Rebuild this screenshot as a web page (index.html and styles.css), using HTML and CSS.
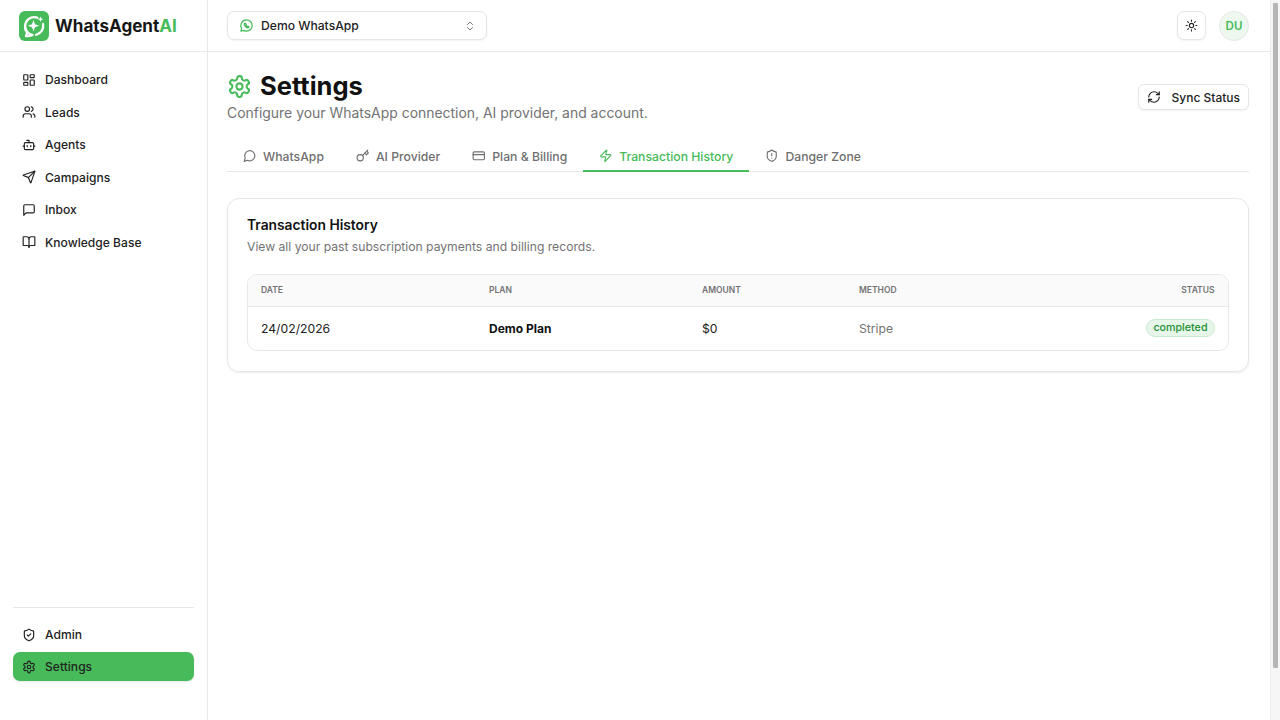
FILE: index.html
```html
<!DOCTYPE html>
<html lang="en">

<head>
  <meta charset="UTF-8" />
  <meta name="viewport" content="width=device-width, initial-scale=1.0" />
  <title>Settings - WhatsAgentAI</title>
  <link rel="stylesheet" href="styles.css">
</head>

<body>
  <div class="app">
    <aside class="sidebar">
      <div class="brand">
        <svg class="brand-logo" viewBox="0 0 30 30" width="30" height="30">
          <rect width="30" height="30" rx="6" fill="#47bb59" />
          <path d="M18.500 6.800A9 9 0 1 0 13.500 24l-.3 0c-1.500 .9-3.700 1.200-6.200 1 .8-1.100 1.100-2.500 .8-4A9 9 0 0 1 6 15M24 13a9 9 0 0 1-7 10.800" fill="none" stroke="#fff" stroke-width="2.300" stroke-linecap="round" stroke-linejoin="round" />
          <path d="M14.500 9l1.500 4.200 4.200 1.500-4.200 1.500-1.500 4.200-1.500-4.200-4.200-1.500 4.200-1.500z" fill="#fff" />
          <path d="M21.500 5.500l.8 2 2 .8-2 .8-.8 2-.8-2-2-.8 2-.8z" fill="#fff" />
        </svg>
        <span class="brand-name">WhatsAgent<span class="brand-ai">AI</span></span>
      </div>

      <nav class="nav">
        <a class="nav-item" href="#">
          <svg class="icon" viewBox="0 0 24 24"><rect x="3" y="3" width="7" height="9" rx="1" /><rect x="14" y="3" width="7" height="5" rx="1" /><rect x="14" y="12" width="7" height="9" rx="1" /><rect x="3" y="16" width="7" height="5" rx="1" /></svg>
          Dashboard
        </a>
        <a class="nav-item" href="#">
          <svg class="icon" viewBox="0 0 24 24"><path d="M16 21v-2a4 4 0 0 0-4-4H6a4 4 0 0 0-4 4v2" /><circle cx="9" cy="7" r="4" /><path d="M22 21v-2a4 4 0 0 0-3-3.870" /><path d="M16 3.130a4 4 0 0 1 0 7.750" /></svg>
          Leads
        </a>
        <a class="nav-item" href="#">
          <svg class="icon" viewBox="0 0 24 24"><path d="M12 8V4H8" /><rect x="4" y="8" width="16" height="12" rx="2" /><path d="M2 14h2" /><path d="M20 14h2" /><path d="M15 13v2" /><path d="M9 13v2" /></svg>
          Agents
        </a>
        <a class="nav-item" href="#">
          <svg class="icon" viewBox="0 0 24 24"><path d="M14.500 21.700a.5.5 0 0 0 .9 0l6.500-19a.5.5 0 0 0-.6-.6l-19 6.500a.5.5 0 0 0 0 .9l7.900 3.200a2 2 0 0 1 1.100 1.100z" /><path d="M21.900 2.100 10.900 13.100" /></svg>
          Campaigns
        </a>
        <a class="nav-item" href="#">
          <svg class="icon" viewBox="0 0 24 24"><path d="M21 15a2 2 0 0 1-2 2H7l-4 4V5a2 2 0 0 1 2-2h14a2 2 0 0 1 2 2z" /></svg>
          Inbox
        </a>
        <a class="nav-item" href="#">
          <svg class="icon" viewBox="0 0 24 24"><path d="M12 7v14" /><path d="M3 18a1 1 0 0 1-1-1V4a1 1 0 0 1 1-1h5a4 4 0 0 1 4 4 4 4 0 0 1 4-4h5a1 1 0 0 1 1 1v13a1 1 0 0 1-1 1h-6a3 3 0 0 0-3 3 3 3 0 0 0-3-3z" /></svg>
          Knowledge Base
        </a>
      </nav>

      <div class="nav-bottom">
        <a class="nav-item" href="#">
          <svg class="icon" viewBox="0 0 24 24"><path d="M20 13c0 5-3.500 7.500-7.660 8.950a1 1 0 0 1-.67-.01C7.500 20.500 4 18 4 13V6a1 1 0 0 1 1-1c2 0 4.500-1.200 6.240-2.720a1.170 1.170 0 0 1 1.520 0C14.510 3.810 17 5 19 5a1 1 0 0 1 1 1z" /><path d="m9 12 2 2 4-4" /></svg>
          Admin
        </a>
        <a class="nav-item active" href="#">
          <svg class="icon" viewBox="0 0 24 24"><path d="M12.220 2h-.44a2 2 0 0 0-2 2v.18a2 2 0 0 1-1 1.730l-.43.25a2 2 0 0 1-2 0l-.15-.08a2 2 0 0 0-2.730.73l-.22.38a2 2 0 0 0 .73 2.730l.15.1a2 2 0 0 1 1 1.720v.51a2 2 0 0 1-1 1.740l-.15.09a2 2 0 0 0-.73 2.730l.22.38a2 2 0 0 0 2.730.73l.15-.08a2 2 0 0 1 2 0l.43.25a2 2 0 0 1 1 1.730V20a2 2 0 0 0 2 2h.44a2 2 0 0 0 2-2v-.18a2 2 0 0 1 1-1.730l.43-.25a2 2 0 0 1 2 0l.15.08a2 2 0 0 0 2.730-.73l.22-.39a2 2 0 0 0-.73-2.730l-.15-.08a2 2 0 0 1-1-1.740v-.5a2 2 0 0 1 1-1.740l.15-.09a2 2 0 0 0 .73-2.730l-.22-.38a2 2 0 0 0-2.730-.73l-.15.08a2 2 0 0 1-2 0l-.43-.25a2 2 0 0 1-1-1.730V4a2 2 0 0 0-2-2z" /><circle cx="12" cy="12" r="3" /></svg>
          Settings
        </a>
      </div>
    </aside>

    <div class="main">
      <header class="topbar">
        <button class="instance-select">
          <span class="instance-label">
            <svg class="icon icon-green" viewBox="0 0 24 24"><path d="M12 3a9 9 0 0 1 0 18 9 9 0 0 1-4.500-1.200L3 21l1.200-4.400A9 9 0 0 1 12 3z" /><path d="M9 8.500c-.6.6-.8 1.600-.3 2.800.7 1.700 2.300 3.300 4 4 1.200.5 2.200.3 2.800-.3l.5-.9-2-1.200-.9.8c-.9-.4-1.900-1.400-2.300-2.300l.8-.9L10.400 8.500z" /></svg>
            Demo WhatsApp
          </span>
          <svg class="icon-small" viewBox="0 0 24 24"><path d="m7 15 5 5 5-5" /><path d="m7 9 5-5 5 5" /></svg>
        </button>
        <div class="topbar-right">
          <button class="theme-btn">
            <svg class="icon" viewBox="0 0 24 24"><circle cx="12" cy="12" r="4" /><path d="M12 2v2" /><path d="M12 20v2" /><path d="m4.930 4.930 1.410 1.410" /><path d="m17.660 17.660 1.410 1.410" /><path d="M2 12h2" /><path d="M20 12h2" /><path d="m6.340 17.660-1.410 1.410" /><path d="m19.070 4.930-1.410 1.410" /></svg>
          </button>
          <div class="avatar">DU</div>
        </div>
      </header>

      <main class="content">
        <div class="page-head">
          <div>
            <h1 class="page-title">
              <svg class="title-icon" viewBox="0 0 24 24"><path d="M12.220 2h-.44a2 2 0 0 0-2 2v.18a2 2 0 0 1-1 1.730l-.43.25a2 2 0 0 1-2 0l-.15-.08a2 2 0 0 0-2.730.73l-.22.38a2 2 0 0 0 .73 2.730l.15.1a2 2 0 0 1 1 1.720v.51a2 2 0 0 1-1 1.740l-.15.09a2 2 0 0 0-.73 2.730l.22.38a2 2 0 0 0 2.730.73l.15-.08a2 2 0 0 1 2 0l.43.25a2 2 0 0 1 1 1.730V20a2 2 0 0 0 2 2h.44a2 2 0 0 0 2-2v-.18a2 2 0 0 1 1-1.730l.43-.25a2 2 0 0 1 2 0l.15.08a2 2 0 0 0 2.730-.73l.22-.39a2 2 0 0 0-.73-2.730l-.15-.08a2 2 0 0 1-1-1.740v-.5a2 2 0 0 1 1-1.740l.15-.09a2 2 0 0 0 .73-2.730l-.22-.38a2 2 0 0 0-2.730-.73l-.15.08a2 2 0 0 1-2 0l-.43-.25a2 2 0 0 1-1-1.730V4a2 2 0 0 0-2-2z" /><circle cx="12" cy="12" r="3" /></svg>
              Settings
            </h1>
            <p class="page-sub">Configure your WhatsApp connection, AI provider, and account.</p>
          </div>
          <button class="sync-btn">
            <svg class="icon" viewBox="0 0 24 24"><path d="M3 12a9 9 0 0 1 9-9 9.750 9.750 0 0 1 6.740 2.740L21 8" /><path d="M21 3v5h-5" /><path d="M21 12a9 9 0 0 1-9 9 9.750 9.750 0 0 1-6.740-2.740L3 16" /><path d="M8 16H3v5" /></svg>
            Sync Status
          </button>
        </div>

        <div class="tabs">
          <a class="tab" href="#">
            <svg class="icon" viewBox="0 0 24 24"><path d="M7.900 20A9 9 0 1 0 4 16.100L2 22z" /></svg>
            WhatsApp
          </a>
          <a class="tab" href="#">
            <svg class="icon" viewBox="0 0 24 24"><circle cx="7.500" cy="15.500" r="5.500" /><path d="m21 2-9.600 9.600" /><path d="m15.500 7.500 3 3L22 7l-3-3" /></svg>
            AI Provider
          </a>
          <a class="tab" href="#">
            <svg class="icon" viewBox="0 0 24 24"><rect x="2" y="5" width="20" height="14" rx="2" /><path d="M2 10h20" /></svg>
            Plan &amp; Billing
          </a>
          <a class="tab tab-active" href="#">
            <svg class="icon" viewBox="0 0 24 24"><path d="M4 14a1 1 0 0 1-.78-1.630l9.900-10.200a.5.5 0 0 1 .86.46l-1.920 6.020A1 1 0 0 0 13 10h7a1 1 0 0 1 .78 1.630l-9.900 10.200a.5.5 0 0 1-.86-.46l1.920-6.020A1 1 0 0 0 11 14z" /></svg>
            Transaction History
          </a>
          <a class="tab" href="#">
            <svg class="icon" viewBox="0 0 24 24"><path d="M20 13c0 5-3.500 7.500-7.660 8.950a1 1 0 0 1-.67-.01C7.500 20.500 4 18 4 13V6a1 1 0 0 1 1-1c2 0 4.500-1.200 6.240-2.720a1.170 1.170 0 0 1 1.520 0C14.510 3.810 17 5 19 5a1 1 0 0 1 1 1z" /><path d="M12 8v4" /><path d="M12 16h.01" /></svg>
            Danger Zone
          </a>
        </div>

        <section class="card">
          <h2 class="card-title">Transaction History</h2>
          <p class="card-sub">View all your past subscription payments and billing records.</p>

          <div class="table-wrap">
            <table class="tx-table">
              <thead>
                <tr>
                  <th class="col-date">Date</th>
                  <th class="col-plan">Plan</th>
                  <th class="col-amount">Amount</th>
                  <th class="col-method">Method</th>
                  <th class="col-status">Status</th>
                </tr>
              </thead>
              <tbody>
                <tr>
                  <td>24/02/2026</td>
                  <td class="plan-name">Demo Plan</td>
                  <td>$0</td>
                  <td class="method">Stripe</td>
                  <td class="col-status"><span class="badge">completed</span></td>
                </tr>
              </tbody>
            </table>
          </div>
        </section>
      </main>
    </div>

    <!-- The window's scrollbar, which the screenshot shows -->
    <div class="scrollbar">
      <div class="scrollbar-thumb"></div>
    </div>
  </div>
</body>

</html>
```

FILE: styles.css
```css
* {
  box-sizing: border-box;
}

body {
  margin: 0;
  font-family: Inter, "Noto Sans", sans-serif;
  color: #111;
  background-color: #fff;
}

a {
  color: inherit;
  text-decoration: none;
}

button {
  font-family: inherit;
  cursor: pointer;
}

/* Layout */
.app {
  display: flex;
  height: 720px;
  overflow: hidden;
}

.scrollbar {
  width: 10px;
  flex-shrink: 0;
  padding: 3px 2px 0;
  background-color: #f6f6f6;
  border-left: 1px solid #ececec;
}

.scrollbar-thumb {
  height: 665px;
  background-color: #b5b5b5;
  border-radius: 1px;
}

/* Sidebar */
.sidebar {
  width: 208px;
  flex-shrink: 0;
  display: flex;
  flex-direction: column;
  border-right: 1px solid #e8e8e8;
}

.brand {
  height: 52px;
  flex-shrink: 0;
  display: flex;
  align-items: center;
  gap: 6px;
  padding-left: 19px;
  border-bottom: 1px solid #e8e8e8;
}

.brand-logo {
  flex-shrink: 0;
}

.brand-name {
  font-size: 17.100px;
  font-weight: 700;
  color: #171717;
}

.brand-ai {
  color: #47bb59;
}

.nav {
  flex: 1;
  display: flex;
  flex-direction: column;
  gap: 3.500px;
  padding: 13px 13px;
}

.nav-item {
  height: 29px;
  display: flex;
  align-items: center;
  gap: 9px;
  padding-left: 9px;
  border-radius: 7px;
  font-size: 12.050px;
  letter-spacing: 0.02px;
  font-weight: 500;
  color: #222;
}

.nav-item.active {
  background-color: #47bb59;
  box-shadow: 0 1px 2px rgba(0, 0, 0, 0.1);
}

.nav-bottom {
  display: flex;
  flex-direction: column;
  gap: 3px;
  margin: 0 13px;
  padding: 12.500px 0 39px;
  border-top: 1px solid #e8e8e8;
}

.icon {
  width: 14px;
  height: 14px;
  flex-shrink: 0;
  fill: none;
  stroke: currentColor;
  stroke-width: 2;
  stroke-linecap: round;
  stroke-linejoin: round;
}

.icon-green {
  width: 15px;
  height: 15px;
  color: #47bb59;
}

.icon-small {
  width: 12px;
  height: 12px;
  fill: none;
  stroke: #777;
  stroke-width: 2;
  stroke-linecap: round;
  stroke-linejoin: round;
}

/* Top bar */
.main {
  flex: 1;
  min-width: 0;
}

.topbar {
  height: 52px;
  display: flex;
  align-items: center;
  justify-content: space-between;
  padding: 0 21px 0 19px;
  border-bottom: 1px solid #e8e8e8;
}

.instance-select {
  width: 260px;
  height: 29px;
  display: flex;
  align-items: center;
  justify-content: space-between;
  padding: 0 10px 0 11px;
  background-color: #fff;
  border: 1px solid #e6e6e6;
  border-radius: 7px;
  box-shadow: 0 1px 2px rgba(0, 0, 0, 0.05);
  font-size: 12.150px;
  font-weight: 500;
  color: #222;
}

.instance-label {
  display: flex;
  align-items: center;
  gap: 7px;
}

.topbar-right {
  display: flex;
  align-items: center;
  gap: 13px;
}

.theme-btn {
  width: 29px;
  height: 29px;
  display: flex;
  align-items: center;
  justify-content: center;
  padding: 0;
  background-color: #fff;
  border: 1px solid #e6e6e6;
  border-radius: 7px;
  box-shadow: 0 1px 2px rgba(0, 0, 0, 0.05);
  color: #222;
}

.theme-btn .icon {
  width: 13px;
  height: 13px;
}

.avatar {
  width: 30px;
  height: 30px;
  display: flex;
  align-items: center;
  justify-content: center;
  border-radius: 50%;
  background-color: #edf8ef;
  border: 1px solid #e6e6e6;
  color: #47bb59;
  font-size: 11.500px;
  font-weight: 600;
}

/* Page head */
.content {
  padding: 19px 21px 20px 19px;
}

.page-head {
  display: flex;
  justify-content: space-between;
  align-items: center;
}

.page-title {
  display: flex;
  align-items: center;
  gap: 8px;
  margin: 0;
  font-size: 25.500px;
  line-height: 30px;
  font-weight: 700;
  color: #111;
}

.title-icon {
  width: 25px;
  height: 25px;
  fill: none;
  stroke: #47bb59;
  stroke-width: 2;
  stroke-linecap: round;
  stroke-linejoin: round;
}

.page-sub {
  margin: 1px 0 0;
  font-size: 13.950px;
  line-height: 21px;
  color: #737373;
}

.sync-btn {
  height: 26px;
  display: flex;
  align-items: center;
  gap: 11px;
  padding: 0 8px;
  background-color: #fff;
  border: 1px solid #e6e6e6;
  border-radius: 6px;
  box-shadow: 0 1px 2px rgba(0, 0, 0, 0.05);
  font-size: 12px;
  font-weight: 500;
  color: #222;
}

/* Tabs */
.tabs {
  display: flex;
  margin-top: 19px;
  border-bottom: 1px solid #e8e8e8;
}

.tab {
  height: 30px;
  display: flex;
  align-items: center;
  gap: 6.500px;
  padding: 0 16px;
  margin-bottom: -1px;
  border-bottom: 2px solid transparent;
  font-size: 12.220px;
  font-weight: 500;
  color: #6f6f6f;
}

.tab .icon {
  width: 13.500px;
  height: 13.500px;
}

.tab-active {
  border-bottom-color: #47bb59;
  color: #47bb59;
}

/* Card */
.card {
  margin-top: 26px;
  padding: 17px 19.500px 20px 19px;
  border: 1px solid #e6e6e6;
  border-radius: 12px;
  box-shadow: 0 1px 2px rgba(0, 0, 0, 0.08);
}

.card-title {
  margin: 0;
  font-size: 13.800px;
  line-height: 18px;
  font-weight: 600;
  color: #111;
}

.card-sub {
  margin: 4px 0 0;
  font-size: 12.150px;
  line-height: 18px;
  color: #737373;
}

.table-wrap {
  margin-top: 18px;
  border: 1px solid #e8e8e8;
  border-radius: 10px;
  overflow: hidden;
}

.tx-table {
  width: 100%;
  border-collapse: collapse;
  font-size: 12.200px;
}

.tx-table th {
  height: 31px;
  padding: 0 13px;
  background-color: #fafafa;
  border-bottom: 1px solid #e8e8e8;
  text-align: left;
  font-size: 8.500px;
  font-weight: 600;
  text-transform: uppercase;
  color: #737373;
}

.tx-table td {
  height: 44px;
  padding: 0 13px;
  color: #222;
}

.tx-table .col-status {
  text-align: right;
}

.col-date {
  width: 228px;
}

.col-plan {
  width: 213px;
}

.col-amount {
  width: 157px;
}

.tx-table .plan-name {
  font-size: 12px;
  font-weight: 700;
  color: #111;
}

.tx-table .method {
  color: #737373;
}

.badge {
  display: inline-block;
  padding: 1px 6px;
  background-color: #e6f6e9;
  border: 1px solid #c9ecd0;
  border-radius: 10px;
  font-size: 10.700px;
  line-height: 14px;
  font-weight: 500;
  color: #1f8f35;
}
```
